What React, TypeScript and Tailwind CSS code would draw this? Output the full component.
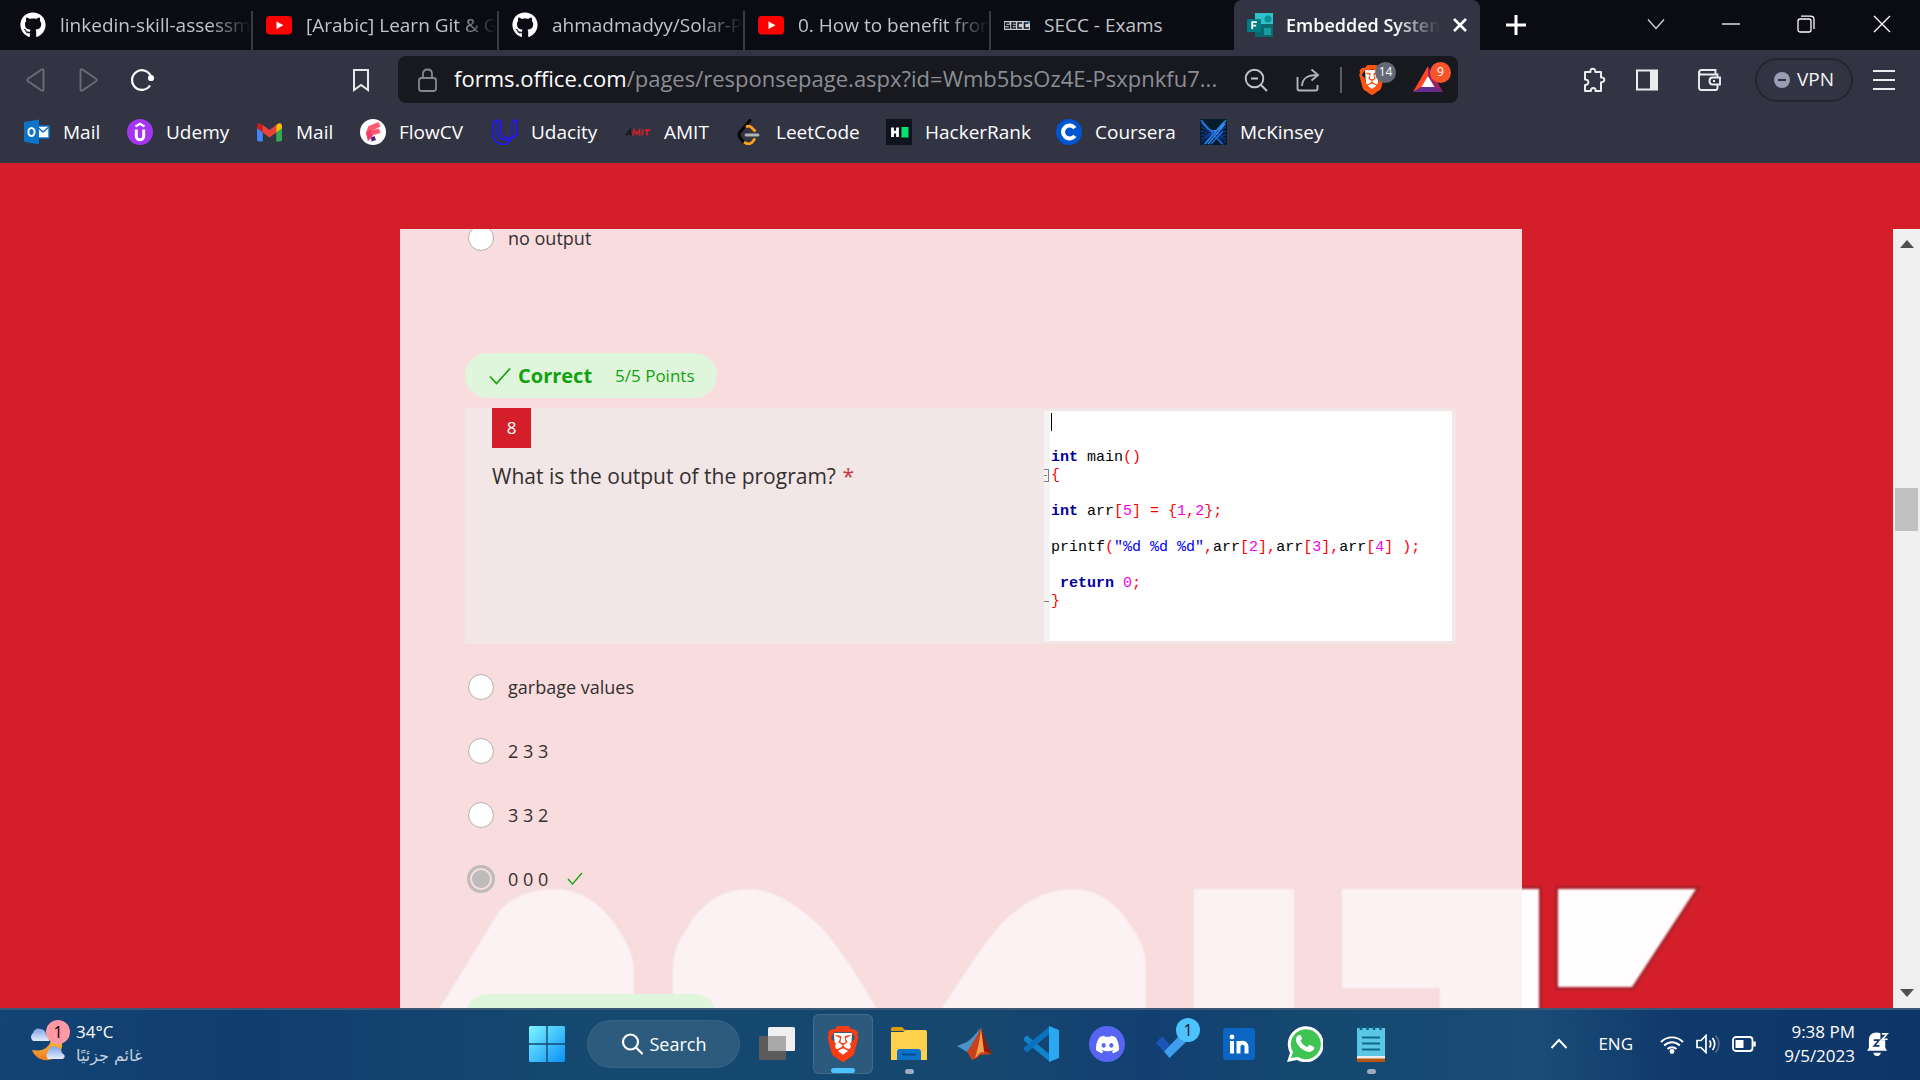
import type { ReactNode } from "react";
import { FaGithub } from "react-icons/fa";
import { SiBrave, SiDiscord } from "react-icons/si";

/* ---------- small brand drawings ---------- */

const YouTube = () => (
  <svg viewBox="0 0 26 26" className="size-[26px]">
    <rect x="0" y="4" width="26" height="18.5" rx="4" fill="#f00" />
    <path d="M10.5 9.4v7.6l7-3.8z" fill="#fff" />
  </svg>
);

const Secc = () => (
  <svg viewBox="0 0 26 26" className="size-[26px]">
    <rect x="0" y="9" width="27" height="9" fill="#c9ccd1" />
    <path
      d="M5.5 11H1.500v2.500h4V16H1M12 11H8v5h4M8 13.500h4M18 11h-4v5h4M24.500 11h-4v5h4.500"
      fill="none"
      stroke="#14161c"
      strokeWidth="1.500"
    />
    <path d="M23 9h3v3z" fill="#3aa0e8" />
  </svg>
);

const FormsIcon = () => (
  <svg viewBox="0 0 27 26" className="h-[26px] w-[27px]">
    <path d="M8 1h18v24H8z" fill="#0b6a70" />
    <path d="M8 1h18v11H8z" fill="#2fc1c7" />
    <circle cx="21" cy="7" r="3.500" fill="#0a8f96" />
    <path d="M17 16h7v7h-7z" fill="#1a9ba1" />
    <rect x="0" y="7" width="14" height="13" rx="1" fill="#037b83" />
    <path d="M5.200 17V10.200h4.600M5.200 13.600h4" fill="none" stroke="#fff" strokeWidth="1.800" />
  </svg>
);

const Outlook = () => (
  <svg viewBox="0 0 26 26" className="size-[26px]">
    <path d="M13 7h12v12H13z" fill="#fff" />
    <path d="M13 7h12v12H13z" fill="none" stroke="#0c73c8" strokeWidth="1.400" />
    <path d="M14 8.500l5 4.500 6-5" fill="none" stroke="#0c73c8" strokeWidth="1.600" />
    <path d="M0 3l15-2.500v25L0 22.800z" fill="#0c73c8" />
    <ellipse cx="7.500" cy="13" rx="3.100" ry="4" fill="none" stroke="#fff" strokeWidth="2" />
  </svg>
);

const Udemy = () => (
  <svg viewBox="0 0 26 26" className="size-[26px]">
    <circle cx="13" cy="13" r="13" fill="#a435f0" />
    <path d="M8.500 7.500L13 4.800l4.500 2.700" fill="none" stroke="#fff" strokeWidth="2.200" />
    <path d="M9.300 10.500v6.800c0 4.800 7.400 4.800 7.400 0v-6.800" fill="none" stroke="#fff" strokeWidth="2.900" />
  </svg>
);

const Gmail = () => (
  <svg viewBox="0 0 26 26" className="size-[26px]">
    <path d="M0 7h5.800v15.500H2Q0 22.500 0 20.500z" fill="#4285f4" />
    <path d="M19.200 7H25v13.500q0 2-2 2h-3.800z" fill="#34a853" />
    <path d="M0 6.500Q.5 3.500 3.500 4.500L5.800 6v7.500L0 9.200z" fill="#c5221f" />
    <path d="M25 6.500Q24.500 3.500 21.500 4.500L19.200 6v7.500L25 9.200z" fill="#fbbc04" />
    <path d="M5.800 6l6.700 5 6.700-5v7.500l-6.700 5-6.700-5z" fill="#ea4335" />
  </svg>
);

const FlowCv = () => (
  <svg viewBox="0 0 26 26" className="size-[26px]">
    <circle cx="13" cy="13" r="13" fill="#fff" />
    <path d="M8.500 7l10-4 2 4.500-7 3.500 5.500-1.500L20.500 14l-7 2-5.500 5.500-2-8z" fill="#ff5a6e" />
    <path d="M6 13.500l5-2.500 1 7-4 4z" fill="#f2386b" />
    <path d="M11 18.500l3.500-1.500 1.500 4-4.500 1.500z" fill="#5b1a8b" />
  </svg>
);

const Udacity = () => (
  <svg viewBox="0 0 26 26" className="size-[26px]">
    <path
      d="M5.500 1L1 3.500v12C1 22 6 25.500 12 25.500c3 0 6-2.500 6-4.500-5 1-12.500-1-12.500-7V1zM25 .8l-5 2.700v15.500l5-3V.8zM20 18.500c-5 2-11-.5-11-7V1"
      fill="none"
      stroke="#2015ff"
      strokeWidth="1.600"
    />
  </svg>
);

const Amit = () => (
  <svg viewBox="0 0 26 26" className="size-[26px]">
    <path d="M1 16.500l4-6 1 6M2.500 15h3.500" fill="none" stroke="#17191f" strokeWidth="1.600" />
    <path d="M8 16.500l1-5.500 2.500 4 3-4v5.500M17 16.500l1-6M20 11h5.500M22.500 11l-.8 5.500" fill="none" stroke="#c81f2a" strokeWidth="1.800" />
  </svg>
);

const LeetCode = () => (
  <svg viewBox="0 0 26 26" className="size-[26px]">
    <path d="M13 1.500L3.500 12.500q-3 3.500 0 7l4 4.500" fill="none" stroke="#070707" strokeWidth="3" strokeLinecap="round" />
    <path d="M9 8q3-2 5.500 .5l4 4" fill="none" stroke="#ffa116" strokeWidth="2.800" />
    <path d="M7 23q4 3.500 8 .5l3-4" fill="none" stroke="#ffa116" strokeWidth="2.800" />
    <path d="M9 16h12" stroke="#b3b3b3" strokeWidth="2.800" strokeLinecap="round" />
  </svg>
);

const HackerRank = () => (
  <svg viewBox="0 0 26 26" className="size-[26px]">
    <path d="M0 0h26v26H0z" fill="#0e141e" />
    <path d="M6.500 8.500v9.500M11.500 8.500v9.500M6.500 13.200h5" stroke="#fff" strokeWidth="2.800" />
    <path d="M15.500 8h7v10.500h-7z" fill="#05e36b" />
  </svg>
);

const Coursera = () => (
  <svg viewBox="0 0 26 26" className="size-[26px]">
    <circle cx="13" cy="13" r="13" fill="#0056d2" />
    <path d="M18.800 9.200a6.500 6.500 0 1 0 0 7.600" fill="none" stroke="#fff" strokeWidth="4" />
  </svg>
);

const McKinsey = () => (
  <svg viewBox="0 0 27 26" className="h-[26px] w-[27px]">
    <path d="M0 0h27v26H0z" fill="#051c2c" />
    <path
      d="M1 4l12 9L3 26M1 8l11 6-11 9M1 12l10 3-10 5M1 16l9 0M26 4l-11 9 9 13M26 8l-10 6 10 9M26 12l-9 3 9 5M26 16l-8 0"
      fill="none"
      stroke="#143fa8"
      strokeWidth="1"
    />
    <path d="M1 1q12.500 22 25 0M5 25L24 3M8 25L25 5" fill="none" stroke="#2f8bf0" strokeWidth="1.500" />
    <path d="M2 2l20 23M11 25l12-13" fill="none" stroke="#1f6fe0" strokeWidth="1.300" />
  </svg>
);

/* ---------- browser chrome ---------- */

const TABS: { title: string; icon: ReactNode }[] = [
  { title: "linkedin-skill-assessm", icon: <FaGithub className="size-[26px] text-white" /> },
  { title: "[Arabic] Learn Git & G", icon: <YouTube /> },
  { title: "ahmadmadyy/Solar-P", icon: <FaGithub className="size-[26px] text-white" /> },
  { title: "0. How to benefit from", icon: <YouTube /> },
  { title: "SECC - Exams", icon: <Secc /> },
];

function TabStrip() {
  return (
    <div className="flex h-[50px] items-stretch bg-[#0b0b14] pl-[7px] text-[19px]">
      {TABS.map((tab, i) => (
        <div key={tab.title} className={i < 4 ? "flex w-[246px] items-stretch" : "flex w-[243px] items-stretch"}>
          <button className="flex min-w-0 flex-1 items-center gap-[14px] pl-[13px] text-[#c3c4c9]">
            <span className="shrink-0">{tab.icon}</span>
            <span
              className={
                i < 4
                  ? "min-w-0 flex-1 overflow-hidden text-left whitespace-nowrap [mask-image:linear-gradient(to_right,#000_78%,transparent)]"
                  : "min-w-0 flex-1 text-left whitespace-nowrap"
              }
            >
              {tab.title}
            </span>
          </button>
          {i < 4 && <span className="mt-[11px] w-[2px] bg-[#3a3a42]" />}
        </div>
      ))}
      <div className="flex w-[246px] items-center rounded-t-lg bg-[#323443] pr-[12px] pl-[13px] text-white">
        <FormsIcon />
        <span className="ml-[12px] min-w-0 flex-1 overflow-hidden text-[18px] font-semibold whitespace-nowrap [mask-image:linear-gradient(to_right,#000_70%,transparent)]">
          Embedded System
        </span>
        <button aria-label="Close tab" className="ml-[12px]">
          <svg viewBox="0 0 16 16" className="size-[16px]" stroke="#fff" strokeWidth="2.600">
            <path d="M2 2l12 12M14 2L2 14" />
          </svg>
        </button>
      </div>
      <button aria-label="New tab" className="ml-[25px]">
        <svg viewBox="0 0 22 22" className="size-[22px]" stroke="#fff" strokeWidth="3">
          <path d="M11 1v20M1 11h20" />
        </svg>
      </button>
      <div className="mb-[2px] ml-auto flex">
        <button aria-label="Search tabs" className="flex w-[75px] items-center justify-center">
          <svg viewBox="0 0 18 18" className="size-[18px]" fill="none" stroke="#d6d6da" strokeWidth="1.300">
            <path d="M1 4.500l8 9 8-9" />
          </svg>
        </button>
        <button aria-label="Minimize" className="flex w-[75px] items-center justify-center">
          <svg viewBox="0 0 18 18" className="size-[18px]" stroke="#fff" strokeWidth="1.300">
            <path d="M0 9h18" />
          </svg>
        </button>
        <button aria-label="Restore" className="flex w-[76px] items-center justify-center">
          <svg viewBox="0 0 18 18" className="size-[18px]" fill="none" stroke="#fff" strokeWidth="1.300">
            <rect x="1" y="4" width="13" height="13" rx="2" />
            <path d="M4 1.200h9.500q3.500 0 3.500 3.500V14" />
          </svg>
        </button>
        <button aria-label="Close" className="flex w-[76px] items-center justify-center">
          <svg viewBox="0 0 18 18" className="size-[18px]" stroke="#fff" strokeWidth="1.300">
            <path d="M1 1l16 16M17 1L1 17" />
          </svg>
        </button>
      </div>
    </div>
  );
}

function Toolbar() {
  return (
    <div className="flex h-[59px] items-center pr-[24px] pl-[24px]">
      <button aria-label="Back" className="w-[52px]">
        <svg viewBox="0 0 24 24" className="size-[24px]" fill="none" stroke="#6b6c79" strokeWidth="1.900" strokeLinejoin="round">
          <path d="M17.500 1.500q2-1 2 1v19q0 2-2 1L4 13.200q-1.500-1.200 0-2.400z" />
        </svg>
      </button>
      <button aria-label="Forward" className="w-[53px]">
        <svg viewBox="0 0 24 24" className="size-[24px]" fill="none" stroke="#6b6c79" strokeWidth="1.900" strokeLinejoin="round">
          <path d="M6.500 1.500q-2-1-2 1v19q0 2 2 1L20 13.200q1.500-1.200 0-2.400z" />
        </svg>
      </button>
      <button aria-label="Reload">
        <svg viewBox="0 0 26 26" className="size-[26px]" fill="none" stroke="#fff" strokeWidth="2.200">
          <path d="M21 18.500A9.800 9.800 0 1 1 22 9.500" />
          <circle cx="22" cy="11" r="2" fill="#fff" />
        </svg>
      </button>
      <button aria-label="Bookmark this page" className="ml-[194px]">
        <svg viewBox="0 0 24 24" className="size-[24px]" fill="none" stroke="#e8e8ec" strokeWidth="2">
          <path d="M5 2h14v20l-7-5-7 5z" />
        </svg>
      </button>
      <div className="ml-[25px] flex h-[47px] max-w-[1060px] flex-1 items-center rounded-lg bg-[#17191f] pl-[18px]">
        <svg viewBox="0 0 24 24" className="size-[24px]" fill="none" stroke="#85868f" strokeWidth="1.800">
          <rect x="3" y="10" width="17" height="13" rx="2.500" />
          <path d="M7 10V6q0-4.500 4.500-4.500T16 6v4" />
        </svg>
        <div className="ml-[14px] min-w-0 flex-1 truncate pb-[2px] text-[22px] text-[#8c8e96]">
          <span className="text-white">forms.office.com</span>
          /pages/responsepage.aspx?id=Wmb5bsOz4E-Psxpnkfu7...
        </div>
        <div className="flex shrink-0 items-center">
          <button aria-label="Zoom" className="w-[52px]">
            <svg viewBox="0 0 24 24" className="size-[24px]" fill="none" stroke="#c3c4ca" strokeWidth="1.900">
              <circle cx="10.500" cy="10.500" r="8.800" />
              <path d="M17 17l6 6M7 10.500h7" />
            </svg>
          </button>
          <button aria-label="Share" className="w-[44px]">
            <svg viewBox="0 0 24 24" className="size-[24px]" fill="none" stroke="#b3b4ba" strokeWidth="1.900">
              <path d="M1.500 9v11.500q0 2 2 2h16q2 0 2-2V17M6 18c.5-7 4-11 15-11M15.500 1.500L22 7l-6.500 5.500" />
            </svg>
          </button>
          <span className="h-[26px] w-[2px] bg-[#5a5c66]" />
          <button aria-label="Brave Shields" className="relative ml-[17px] flex h-[40px] w-[54px] items-center">
            <span className="relative block h-[30px] w-[26px]">
              <svg viewBox="0 0 26 30" className="h-[30px] w-[26px]">
                <path d="M6 5h14l-1 16-6 5-6-5z" fill="#fff" />
              </svg>
              <SiBrave className="absolute top-0 -left-[2px] size-[30px] text-[#fb5413]" />
            </span>
            <span className="absolute top-[2px] left-[16px] flex h-[21px] w-[21px] items-center justify-center rounded-full bg-[#646876] text-[12px] text-white">
              14
            </span>
          </button>
          <button aria-label="Rewards" className="relative flex h-[40px] w-[45px] items-center">
            <svg viewBox="0 0 30 27" className="h-[27px] w-[30px]">
              <path d="M15 0L0 26l9-5 6-11z" fill="#ff4724" />
              <path d="M15 0l15 26-9-5-6-11z" fill="#9e1f63" />
              <path d="M0 26h30l-8-5H8z" fill="#662d91" />
              <path d="M15 10l-6.500 11h13z" fill="#fff" />
            </svg>
            <span className="absolute top-[2px] left-[17px] flex size-[21px] items-center justify-center rounded-full bg-[#fb542b] text-[12px] text-white">
              9
            </span>
          </button>
        </div>
      </div>
      <div className="ml-auto flex items-center">
        <button aria-label="Extensions" className="mr-[28px]">
          <svg viewBox="0 0 26 26" className="size-[26px]" fill="none" stroke="#ececf0" strokeWidth="2" strokeLinejoin="round">
            <path d="M4 5h5.500c-.8-4.500 5.300-4.500 4.800 0H20v5.500c4.500-.5 4.500 5 0 4.800V24h-5.500c1-4-5.500-4-4.500 0H4v-6c4.500 .5 4.500-6 0-5.500z" />
          </svg>
        </button>
        <button aria-label="Sidebar" className="mr-[38px]">
          <svg viewBox="0 0 24 24" className="size-[24px]">
            <rect x="2" y="2.500" width="20" height="19" fill="none" stroke="#ececf0" strokeWidth="2" />
            <path d="M15 2.500h7v19h-7z" fill="#ececf0" />
          </svg>
        </button>
        <button aria-label="Wallet" className="mr-[34px]">
          <svg viewBox="0 0 24 24" className="size-[24px]" fill="none" stroke="#ececf0" strokeWidth="1.900">
            <path d="M20.500 9V6.500h-17L2 5V19.500q0 2.500 2.500 2.500h14q2 0 2-2.500V17M2 5q0-3 2.500-3h14v4" />
            <path d="M23 9.500h-7.500q-3 0-3 3.500t3 3.500H23z" />
            <path d="M16 13h2" />
          </svg>
        </button>
        <button className="mr-[19px] flex h-[44px] w-[98px] items-center justify-center gap-[7px] rounded-full border-2 border-[#232531] text-[19px] text-[#f2f2f5]">
          <svg viewBox="0 0 16 16" className="size-[16px]">
            <circle cx="8" cy="8" r="8" fill="#9a9bb5" />
            <path d="M4 8h8" stroke="#2d2f3e" strokeWidth="2" />
          </svg>
          VPN
        </button>
        <button aria-label="Menu">
          <svg viewBox="0 0 24 24" className="size-[24px]" stroke="#ececf0" strokeWidth="2">
            <path d="M1 3h22M1 12h22M1 21h22" />
          </svg>
        </button>
      </div>
    </div>
  );
}

const BOOKMARKS: { label: string; icon: ReactNode; width: string }[] = [
  { label: "Mail", icon: <Outlook />, width: "w-[103px]" },
  { label: "Udemy", icon: <Udemy />, width: "w-[130px]" },
  { label: "Mail", icon: <Gmail />, width: "w-[103px]" },
  { label: "FlowCV", icon: <FlowCv />, width: "w-[132px]" },
  { label: "Udacity", icon: <Udacity />, width: "w-[133px]" },
  { label: "AMIT", icon: <Amit />, width: "w-[112px]" },
  { label: "LeetCode", icon: <LeetCode />, width: "w-[149px]" },
  { label: "HackerRank", icon: <HackerRank />, width: "w-[170px]" },
  { label: "Coursera", icon: <Coursera />, width: "w-[144px]" },
  { label: "McKinsey", icon: <McKinsey />, width: "w-[144px]" },
];

function Bookmarks() {
  return (
    <nav className="flex h-[54px] items-center pb-[8px] pl-[24px] text-[19px] text-white">
      {BOOKMARKS.map((b, i) => (
        <a key={i} href="#" className={`flex items-center gap-[13px] whitespace-nowrap ${b.width}`}>
          <span className="shrink-0">{b.icon}</span>
          {b.label}
        </a>
      ))}
    </nav>
  );
}

/* ---------- page ---------- */

function BackdropLogo() {
  return (
    <svg
      viewBox="0 860 1920 148"
      className="absolute bottom-0 left-0 w-full"
      aria-hidden="true"
    >
      <g fill="#fffdfd" stroke="#8c2029" strokeOpacity="0.600" strokeWidth="6" paintOrder="stroke" className="blur-[1px]">
        <path d="M436 1014L471 957 500 910Q520 889 556 889 592 890 616 926 634 950 634 972V1014z" />
        <path d="M673 1014V967Q673 947 686 930 708 889 750 889 782 889 824 930 850 962 880 1014z" />
        <path d="M938 1014L967 970Q985 942 1003 922 1037 889 1072 889 1108 889 1131 926 1146 946 1146 970V1014z" />
        <path d="M1194 889h100v126h-100z" />
        <path d="M1342 889h197v126h-99v-27h-98z" />
        <path d="M1558 889h138l-64 98h-74z" />
      </g>
    </svg>
  );
}

function Option({ name, label, checked }: { name: string; label: string; checked?: boolean }) {
  return (
    <label className="flex h-[26px] items-center text-[18px] text-[#333031]">
      <span className="flex w-[43px] shrink-0">
        {checked ? (
          <input
            type="radio"
            name={name}
            defaultChecked
            className="ml-[2px] size-[28px] appearance-none rounded-full border-[3px] border-[#bdbbbb] bg-[#bdbbbb] shadow-[inset_0_0_0_2px_#f9dcdd]"
          />
        ) : (
          <input type="radio" name={name} className="ml-[3px] size-[26px] appearance-none rounded-full border border-[#b5b2b2] bg-white" />
        )}
      </span>
      {label}
      {checked && (
        <svg viewBox="0 0 16 14" className="ml-[19px] h-[14px] w-[16px]" fill="none" stroke="#13a10e" strokeWidth="1.300">
          <path d="M1 7l4.500 5L15 1" />
        </svg>
      )}
    </label>
  );
}

const K = ({ children }: { children: ReactNode }) => <b className="text-[#00009c]">{children}</b>;
const P = ({ children }: { children: ReactNode }) => <span className="text-[#ff0000]">{children}</span>;
const N = ({ children }: { children: ReactNode }) => <span className="text-[#f000f0]">{children}</span>;

function CodeShot() {
  return (
    <div className="mt-[3px] mr-[4px] mb-[3px] flex w-[408px] shrink-0 bg-white">
      <div className="w-[6px] bg-[#f4f4f4] pt-[58px]">
        <div className="flex h-[13px] w-[5px] items-center border border-l-0 border-[#808080]">
          <span className="h-px w-[3px] bg-[#808080]" />
        </div>
        <div className="mt-[119px] h-px w-[5px] bg-[#808080]" />
      </div>
      <pre className="pt-[2px] pl-px font-['Liberation_Mono',monospace] text-[15px] leading-[18px] text-black">
        <span className="inline-block h-[18px] w-px bg-black align-top" />
        {"\n\n"}
        <K>int</K> main<P>()</P>
        {"\n"}
        <P>{"{"}</P>
        {"\n\n"}
        <K>int</K> arr<P>[</P><N>5</N><P>] = {"{"}</P><N>1</N><P>,</P><N>2</N><P>{"};"}</P>
        {"\n\n"}
        printf<P>(</P><span className="text-[#0000ff]">"%d %d %d"</span><P>,</P>arr<P>[</P><N>2</N><P>],</P>arr<P>[</P><N>3</N><P>],</P>arr<P>[</P><N>4</N><P>] );</P>
        {"\n\n "}
        <K>return</K> <N>0</N><P>;</P>
        {"\n"}
        <P>{"}"}</P>
      </pre>
    </div>
  );
}

function Quiz() {
  return (
    <main className="h-full w-full max-w-[1122px] justify-self-center overflow-hidden bg-[#fdf1f2]/90 pr-[66px] pl-[65px]">
      <div className="-mt-[4px]">
        <Option name="q7" label="no output" />
      </div>
      <div className="mt-[102px] flex h-[45px] w-[252px] items-center rounded-full bg-[#dff6dd] pl-[24px] text-[#13a10e]">
        <svg viewBox="0 0 22 18" className="h-[18px] w-[22px]" fill="none" stroke="#13a10e" strokeWidth="1.700">
          <path d="M1 9.500l6.500 7L21 1.500" />
        </svg>
        <span className="ml-[7px] text-[20px] leading-[24px] font-bold">Correct</span>
        <span className="ml-[23px] text-[17px] leading-[24px]">5/5 Points</span>
      </div>
      <section className="mt-[10px] flex min-h-[236px] bg-[#f2e6e6]">
        <div className="flex-1 pl-[27px]">
          <div className="flex h-[40px] w-[39px] items-center justify-center bg-[#d41f2a] text-[17px] text-white">8</div>
          <h2 className="mt-[12px] text-[21px] leading-[32px] text-[#333031]">
            What is the output of the program? <span className="ml-px text-[#c9363f]">*</span>
          </h2>
        </div>
        <CodeShot />
      </section>
      <div className="mt-[30px] flex flex-col gap-[38px]">
        <Option name="q8" label="garbage values" />
        <Option name="q8" label="2 3 3" />
        <Option name="q8" label="3 3 2" />
        <Option name="q8" label="0 0 0" checked />
      </div>
      <div className="mt-[102px] h-[45px] w-[252px] rounded-full bg-[#dff6dd]" />
    </main>
  );
}

function ScrollBar() {
  return (
    <div className="flex flex-col items-center bg-[#f0f0f0] py-[11px]">
      <svg viewBox="0 0 14 8" className="h-[8px] w-[14px]" fill="#505050">
        <path d="M7 0l7 8H0z" />
      </svg>
      <div className="mt-[240px] h-[43px] w-[23px] bg-[#c1c1c1]" />
      <svg viewBox="0 0 14 8" className="mt-auto h-[8px] w-[14px]" fill="#505050">
        <path d="M7 8l7-8H0z" />
      </svg>
    </div>
  );
}

/* ---------- taskbar ---------- */

function TaskButton({ label, active, running, children }: { label: string; active?: boolean; running?: boolean; children: ReactNode }) {
  return (
    <button
      aria-label={label}
      className={`relative flex size-[60px] shrink-0 items-center justify-center rounded-md ${active ? "border border-white/10 bg-white/10" : ""}`}
    >
      {children}
      {active && <span className="absolute bottom-0 h-[5px] w-[24px] rounded-full bg-[#4cc2ff]" />}
      {running && <span className="absolute bottom-0 h-[5px] w-[9px] rounded-full bg-[#9aacbe]" />}
    </button>
  );
}

const Count = () => (
  <span className="absolute top-[4px] left-[33px] flex size-[24px] items-center justify-center rounded-full bg-[#4cc2ff] text-[16px] text-[#0b1a2b]">
    1
  </span>
);

function Taskbar() {
  return (
    <footer className="flex h-[72px] shrink-0 items-center border-t-2 border-[#3a5875] bg-[linear-gradient(90deg,#124474_0%,#103d6e_13%,#15496f_30%,#15476f_52%,#123f72_60%,#14486f_67%,#1a4c76_80%,#103a6c_87%,#0e3567_100%)] pb-[2px] text-white">
      <div className="flex flex-1 items-center pl-[28px]">
        <div className="relative mb-[6px] h-[42px] w-[40px]">
          <svg viewBox="0 0 40 42" className="h-[42px] w-[40px]">
            <defs>
              <linearGradient id="moon" x1="0" y1="0" x2="0" y2="1">
                <stop offset="0" stopColor="#f6c545" />
                <stop offset="1" stopColor="#f07b1c" />
              </linearGradient>
              <linearGradient id="cloud" x1="0" y1="0" x2="0" y2="1">
                <stop offset="0" stopColor="#7fa2e8" />
                <stop offset="1" stopColor="#e4ecfb" />
              </linearGradient>
            </defs>
            <path d="M32 17a15.500 15.500 0 1 1-28 13q17 3 20-13z" fill="url(#moon)" />
            <path d="M5 21a5 5 0 0 1 0-8q2-6 8-4 5 1 5 6 6 1 3 6z" fill="url(#cloud)" />
            <path d="M20 39a5 5 0 0 1 0-7q2-7 9-5 4 1 5 6 5 3 1 6z" fill="url(#cloud)" />
          </svg>
          <span className="absolute top-0 left-[18px] flex size-[24px] items-center justify-center rounded-full bg-[#ff99a4] text-[16px] text-black">1</span>
        </div>
        <div className="ml-[8px] text-[16px] leading-[24px]">
          <div className="text-[17px]">34°C</div>
          <div dir="rtl" className="font-['DejaVu_Sans',sans-serif] text-[16px] text-[#c3d0de]">غائم جزئيًا</div>
        </div>
      </div>
      <div className="flex items-center">
        <TaskButton label="Start">
          <svg viewBox="0 0 36 36" className="size-[36px]">
            <defs>
              <linearGradient id="win" x1="0" y1="0" x2="1" y2="1">
                <stop offset="0" stopColor="#7df5ff" />
                <stop offset="1" stopColor="#0a90f5" />
              </linearGradient>
            </defs>
            <path d="M1 0h16.300v17.300H0V1zM18.700 0H35l1 1v16.300H18.700zM0 18.700h17.300V36H1l-1-1zM18.700 18.700H36V35l-1 1H18.700z" fill="url(#win)" />
          </svg>
        </TaskButton>
        <button className="mr-[7px] ml-[10px] flex h-[48px] w-[153px] items-center justify-center gap-[7px] rounded-full border border-white/5 bg-white/10 text-[18px]">
          <svg viewBox="0 0 22 22" className="size-[22px]" fill="none" stroke="#fff" strokeWidth="2.200" strokeLinecap="round">
            <circle cx="9.500" cy="9" r="7.500" />
            <path d="M15 14.500l6 6" />
          </svg>
          Search
        </button>
        <div className="flex items-center gap-[6px]">
          <TaskButton label="Task view">
            <svg viewBox="0 0 36 36" className="size-[36px]">
              <rect x="0" y="10" width="27" height="24" rx="1.500" fill="#5b5b5b" />
              <rect x="9" y="1" width="27" height="24" rx="1.500" fill="#f0f0f0" />
              <path d="M9 10h18v15H9z" fill="#a9a9a9" />
            </svg>
          </TaskButton>
          <TaskButton label="Brave" active>
            <span className="relative block h-[36px] w-[32px]">
              <svg viewBox="0 0 32 36" className="h-[36px] w-[32px]">
                <path d="M7 7h18l-1 18-8 6-8-6z" fill="#fff" />
              </svg>
              <SiBrave className="absolute top-0 -left-[2px] size-[36px] text-[#fa3c12]" />
            </span>
          </TaskButton>
          <TaskButton label="File Explorer" running>
            <svg viewBox="0 0 36 36" className="size-[36px]">
              <path d="M0 3q0-2 2-2h9l4 4H0z" fill="#dc9c0c" />
              <path d="M0 6h12l3-2h19q2 0 2 2v28H0z" fill="#ffd04b" />
              <path d="M6 34V26q0-3 3-3h18q3 0 3 3v8z" fill="#0b73c9" />
              <path d="M11 28.500h14" stroke="#064a8d" strokeWidth="2" />
            </svg>
          </TaskButton>
          <TaskButton label="MATLAB">
            <svg viewBox="0 0 36 36" className="size-[36px]">
              <path d="M0 20l10-4q7-5 13-14l-4 14-9 10z" fill="#4b93c8" />
              <path d="M24 2q-5 10-14 24l5 8q5-1 8-5l12-1Q30 20 24 2z" fill="#c8401c" />
              <path d="M24 2q-1 14-6 30l5-5q2-2 4 0 1-12-3-25z" fill="#f5a04c" />
              <path d="M24 2q6 18 11 26l-8-3z" fill="#8a1c0c" />
            </svg>
          </TaskButton>
          <TaskButton label="Visual Studio Code">
            <svg viewBox="0 0 36 36" className="size-[36px]">
              <path d="M1 12l3-2.500 24 20L27 36 1 14.500z" fill="#1283cc" />
              <path d="M1 24l3 2.500 24-20L27 0 1 21.500z" fill="#0a72bd" />
              <path d="M26 0l10 4v28l-10 4z" fill="#2aa8f2" />
            </svg>
          </TaskButton>
          <TaskButton label="Discord">
            <span className="flex size-[36px] items-center justify-center rounded-full bg-[#5865f2]">
              <SiDiscord className="size-[23px] text-white" />
            </span>
          </TaskButton>
          <TaskButton label="To Do">
            <svg viewBox="0 0 36 36" className="size-[36px]">
              <path d="M7 10l8 9-6 6.500L1 17z" fill="#1a55b8" />
              <path d="M14.500 32L9 25.500 28 6l7 6z" fill="#3f9fee" />
            </svg>
            <Count />
          </TaskButton>
          <TaskButton label="LinkedIn">
            <svg viewBox="0 0 32 32" className="size-[32px]">
              <rect width="32" height="32" rx="3" fill="#0a66c2" />
              <circle cx="9" cy="9" r="2.400" fill="#fff" />
              <path d="M9 13v12.500" stroke="#fff" strokeWidth="4" />
              <path d="M15.500 25.500V13M15.500 18.500c0-5 8-5 8 0v7" fill="none" stroke="#fff" strokeWidth="4" />
            </svg>
          </TaskButton>
          <TaskButton label="WhatsApp">
            <svg viewBox="0 0 36 36" className="size-[36px]">
              <path d="M0 36l3-9A18 18 0 1 1 10 34z" fill="#fff" />
              <path d="M4 32l2-6A15 15 0 1 1 11 31z" fill="#3fc453" />
              <path d="M12 9q-3 1-3 5 0 4 6 9 6 4.500 10 2 3-2 2-4l-4-2q-1-.5-2.500 2-5-1.500-7-6.500 2-1.500 1.500-2.500l-1.500-3z" fill="#fff" />
            </svg>
          </TaskButton>
          <TaskButton label="Notepad" running>
            <svg viewBox="0 0 30 36" className="h-[36px] w-[30px]">
              <path d="M1 2h28v31H1z" fill="#5cc6e6" />
              <path d="M1 30h28v3H1z" fill="#e9edf0" />
              <path d="M1 32.500h28V36H1z" fill="#b8560f" />
              <path d="M5 0v4M11.500 0v4M18 0v4M24.500 0v4" stroke="#0d5f80" strokeWidth="2.500" />
              <path d="M6 11.500h18M6 17.500h18M6 23.500h18" stroke="#0d6a8c" strokeWidth="2" />
            </svg>
          </TaskButton>
        </div>
      </div>
      <div className="flex flex-1 items-center justify-end pr-[30px]">
        <button aria-label="Hidden icons">
          <svg viewBox="0 0 18 18" className="size-[18px]" fill="none" stroke="#fff" strokeWidth="2">
            <path d="M1.500 13L9 5l7.500 8" />
          </svg>
        </button>
        <span className="ml-[30px] text-[17px]">ENG</span>
        <svg viewBox="0 0 24 20" className="ml-[27px] h-[20px] w-[24px]" fill="none" stroke="#fff" strokeWidth="1.900">
          <path d="M1 8a15.500 15.500 0 0 1 22 0M4.200 11.500a11 11 0 0 1 15.600 0M7.500 15a6.500 6.500 0 0 1 9 0" />
          <circle cx="12" cy="17.500" r="1.500" fill="#fff" />
        </svg>
        <svg viewBox="0 0 24 20" className="ml-[12px] h-[20px] w-[24px]" fill="none" stroke="#fff" strokeWidth="1.700">
          <path d="M1 6.500h4l5-5v17l-5-5H1zM13.500 6.500q2.500 3.500 0 7M16.500 4q4.500 6 0 12" />
          <path d="M19.500 1.500q7 8.500 0 17" stroke="#4f6a8e" />
        </svg>
        <svg viewBox="0 0 24 16" className="ml-[12px] h-[16px] w-[24px]" fill="none" stroke="#fff" strokeWidth="1.800">
          <rect x="1" y="1" width="19.500" height="14" rx="3" />
          <path d="M3.500 4h8v8h-8z" fill="#fff" stroke="none" />
          <path d="M22.500 5.500v5" strokeWidth="2.500" />
        </svg>
        <div className="ml-[22px] w-[77px] text-right text-[17px] leading-[24px] whitespace-nowrap">
          <div>9:38 PM</div>
          <div>9/5/2023</div>
        </div>
        <svg viewBox="0 0 24 26" className="ml-[12px] h-[26px] w-[23px] shrink-0">
          <path d="M2 17V9q0-8 8-8t9 8v8l2 3H0z" fill="#fff" />
          <path d="M6.500 22h8q-1 3.500-4 3.500t-4-3.500z" fill="#fff" />
          <path d="M7 9h5.500L7.500 15H13" fill="none" stroke="#0e3668" strokeWidth="1.700" />
          <path d="M14 1h8v8h-8z" fill="#0e3668" />
          <path d="M15.500 2.500h5.500l-5 5.500h5.500" fill="none" stroke="#fff" strokeWidth="1.700" />
        </svg>
      </div>
    </footer>
  );
}

export default function App() {
  return (
    <div className="flex h-screen flex-col overflow-hidden font-['Open_Sans',sans-serif]">
      <header className="shrink-0 bg-[#323443]">
        <TabStrip />
        <Toolbar />
        <Bookmarks />
      </header>
      <div className="relative grid min-h-0 flex-1 grid-cols-[29px_minmax(0,1fr)_27px] bg-[#d41f2a] pt-[66px]">
        <BackdropLogo />
        <div />
        <div className="relative grid min-h-0">
          <Quiz />
        </div>
        <ScrollBar />
      </div>
      <Taskbar />
    </div>
  );
}
